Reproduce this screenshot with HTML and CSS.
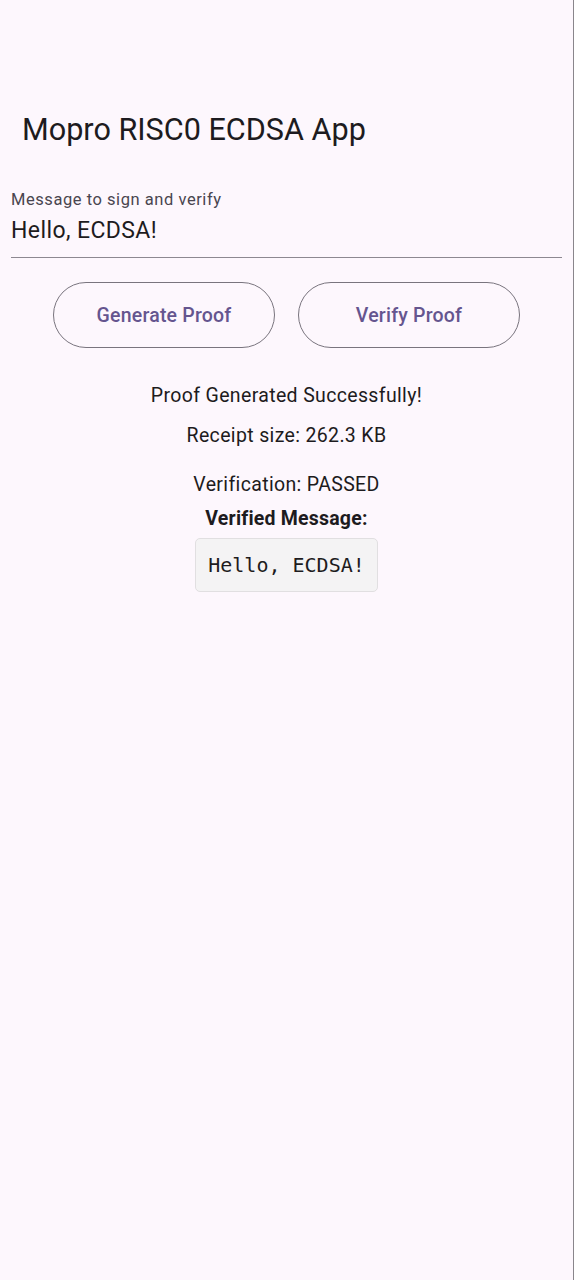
FILE: index.html
```html
<!DOCTYPE html>
<html>
<head>
<meta charset="utf-8">
<link rel="stylesheet" href="styles.css">
</head>
<body>
<div class="screen">
  <header class="appbar">
    <h1 class="title">Mopro RISC0 ECDSA App</h1>
  </header>
  <main class="content">
    <div class="field">
      <label class="field-label">Message to sign and verify</label>
      <div class="field-value">Hello, ECDSA!</div>
    </div>
    <div class="buttons">
      <button class="btn">Generate Proof</button>
      <button class="btn">Verify Proof</button>
    </div>
    <div class="results">
      <p class="line status">Proof Generated Successfully!</p>
      <p class="line receipt">Receipt size: 262.3 KB</p>
      <p class="line verification">Verification: PASSED</p>
      <p class="line bold">Verified Message:</p>
      <div class="code">Hello, ECDSA!</div>
    </div>
  </main>
</div>
</body>
</html>
```
FILE: styles.css
```css
* { box-sizing: border-box; }
html, body { margin: 0; padding: 0; }
body {
  background: #fdf7fd;
  font-family: Roboto, "Liberation Sans", sans-serif;
  color: #1d1b20;
}
.screen {
  width: 574px;
  min-height: 1280px;
  border-right: 1px solid #8a868c;
}
.appbar {
  height: 168px;
  padding: 108px 0 0 22px;
}
.title {
  margin: 0;
  font-size: 30.6px;
  font-weight: 400;
  line-height: 44px;
  letter-spacing: 0;
}
.content {
  padding: 0 11px;
}
.field {
  padding-top: 22px;
  border-bottom: 1.5px solid #8d8891;
  height: 90px;
}
.field-label {
  display: block;
  font-size: 16.5px;
  color: #49454f;
  line-height: 20px;
  letter-spacing: 0.55px;
}
.field-value {
  font-size: 23px;
  line-height: 34px;
  margin-top: 4px;
  letter-spacing: 0.4px;
}
.buttons {
  display: flex;
  justify-content: center;
  gap: 23px;
  margin-top: 24px;
}
.btn {
  width: 222px;
  height: 66px;
  border: 1.3px solid #79747e;
  border-radius: 33px;
  background: transparent;
  color: #65558f;
  font-family: Roboto, "Liberation Sans", sans-serif;
  font-size: 19.5px;
  font-weight: 500;
  letter-spacing: 0.2px;
}
.results {
  display: flex;
  flex-direction: column;
  align-items: center;
  margin-top: 34px;
}
.line {
  margin: 0;
  font-size: 19.5px;
  line-height: 28px;
  letter-spacing: 0.35px;
}
.receipt { margin-top: 12px; }
.verification { margin-top: 21px; }
.bold { font-weight: 700; margin-top: 6px; letter-spacing: 0.2px; }
.code {
  margin-top: 5px;
  padding: 12px 12px;
  background: #f4f3f4;
  border: 1px solid #e1dfe1;
  border-radius: 5px;
  font-family: "DejaVu Sans Mono", monospace;
  font-size: 20px;
  line-height: 28px;
  color: #1d1b20;
}
```
